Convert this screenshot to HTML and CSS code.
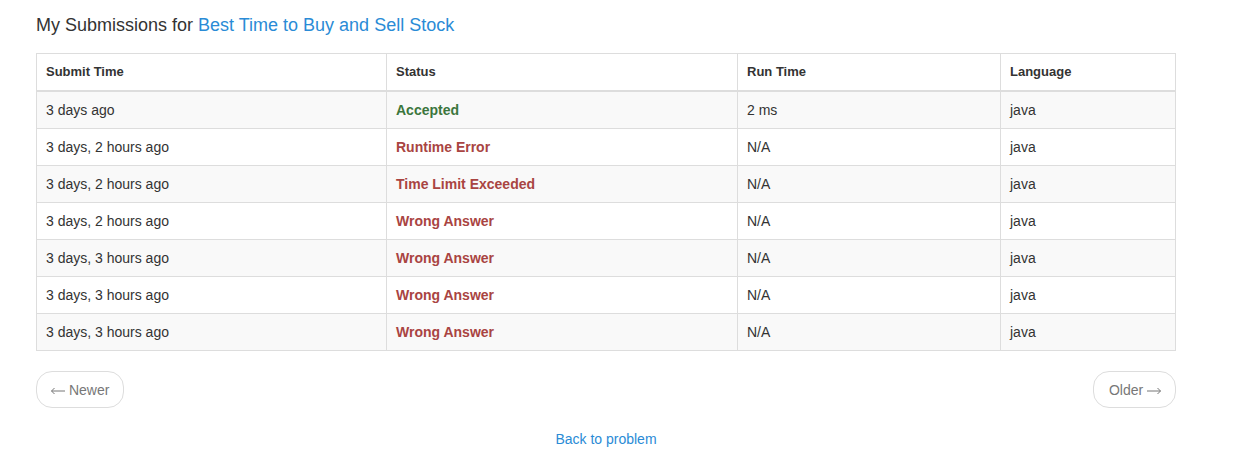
FILE: index.html
```html
<!DOCTYPE html>
<html>
<head>
<meta charset="utf-8">
<link rel="stylesheet" href="styles.css">
</head>
<body>
<div class="wrap">
  <h3 class="title">My Submissions for <a href="#">Best Time to Buy and Sell Stock</a></h3>
  <table class="subs">
    <colgroup>
      <col style="width:350px"><col style="width:351px"><col style="width:263px"><col style="width:175px">
    </colgroup>
    <thead>
      <tr><th>Submit Time</th><th>Status</th><th>Run Time</th><th>Language</th></tr>
    </thead>
    <tbody>
      <tr><td>3 days ago</td><td><a class="ok" href="#">Accepted</a></td><td>2 ms</td><td>java</td></tr>
      <tr><td>3 days, 2 hours ago</td><td><a class="bad" href="#">Runtime Error</a></td><td>N/A</td><td>java</td></tr>
      <tr><td>3 days, 2 hours ago</td><td><a class="bad" href="#">Time Limit Exceeded</a></td><td>N/A</td><td>java</td></tr>
      <tr><td>3 days, 2 hours ago</td><td><a class="bad" href="#">Wrong Answer</a></td><td>N/A</td><td>java</td></tr>
      <tr><td>3 days, 3 hours ago</td><td><a class="bad" href="#">Wrong Answer</a></td><td>N/A</td><td>java</td></tr>
      <tr><td>3 days, 3 hours ago</td><td><a class="bad" href="#">Wrong Answer</a></td><td>N/A</td><td>java</td></tr>
      <tr><td>3 days, 3 hours ago</td><td><a class="bad" href="#">Wrong Answer</a></td><td>N/A</td><td>java</td></tr>
    </tbody>
  </table>
  <div class="pager">
    <a class="pbtn" href="#"><svg class="arr" width="14" height="8" viewBox="0 0 14 8"><path d="M0.5 4H14M0.5 4L3.5 1M0.5 4L3.5 7" stroke="#777" stroke-width="1" fill="none"/></svg> Newer</a>
    <a class="pbtn older" href="#">Older <svg class="arr" width="14" height="8" viewBox="0 0 14 8"><path d="M0 4H13.5M13.5 4L10.5 1M13.5 4L10.5 7" stroke="#777" stroke-width="1" fill="none"/></svg></a>
  </div>
  <div class="back"><a href="#">Back to problem</a></div>
</div>
</body>
</html>
```

FILE: styles.css
```css
html, body {
  margin: 0;
  padding: 0;
  background: #fff;
}
body {
  font-family: "Liberation Sans", Arial, sans-serif;
  font-size: 14px;
  line-height: 20px;
  color: #333;
}
a {
  color: #2a8bd6;
  text-decoration: none;
}
.wrap {
  width: 1140px;
  margin-left: 36px;
  padding-top: 15px;
}
.title {
  margin: 0 0 18px;
  font-size: 18px;
  font-weight: normal;
  line-height: 20px;
  color: #333;
}
.subs {
  width: 1139px;
  border-collapse: collapse;
  table-layout: fixed;
  border: 1px solid #ddd;
  margin-bottom: 20px;
}
.subs th, .subs td {
  border: 1px solid #ddd;
  padding: 8px 9px;
  text-align: left;
  line-height: 20px;
  vertical-align: top;
}
.subs th {
  font-weight: bold;
  font-size: 13px;
  border-bottom-width: 2px;
  color: #333;
}
.subs tbody tr:nth-child(odd) {
  background: #f9f9f9;
}
.subs td {
  color: #333;
}
.ok {
  color: #3c763d;
  font-weight: bold;
}
.bad {
  color: #a94442;
  font-weight: bold;
}
.pager {
  display: flex;
  justify-content: space-between;
  width: 1140px;
  margin-bottom: 21px;
}
.pbtn {
  display: inline-block;
  padding: 8px 14px 7px;
  border: 1px solid #ddd;
  border-radius: 16px;
  color: #777;
  background: #fff;
  line-height: 20px;
}
.pbtn.older {
  padding-left: 15px;
}
.arr {
  vertical-align: 0px;
}
.back {
  text-align: center;
}
.back a {
  color: #2a8bd6;
}
```
